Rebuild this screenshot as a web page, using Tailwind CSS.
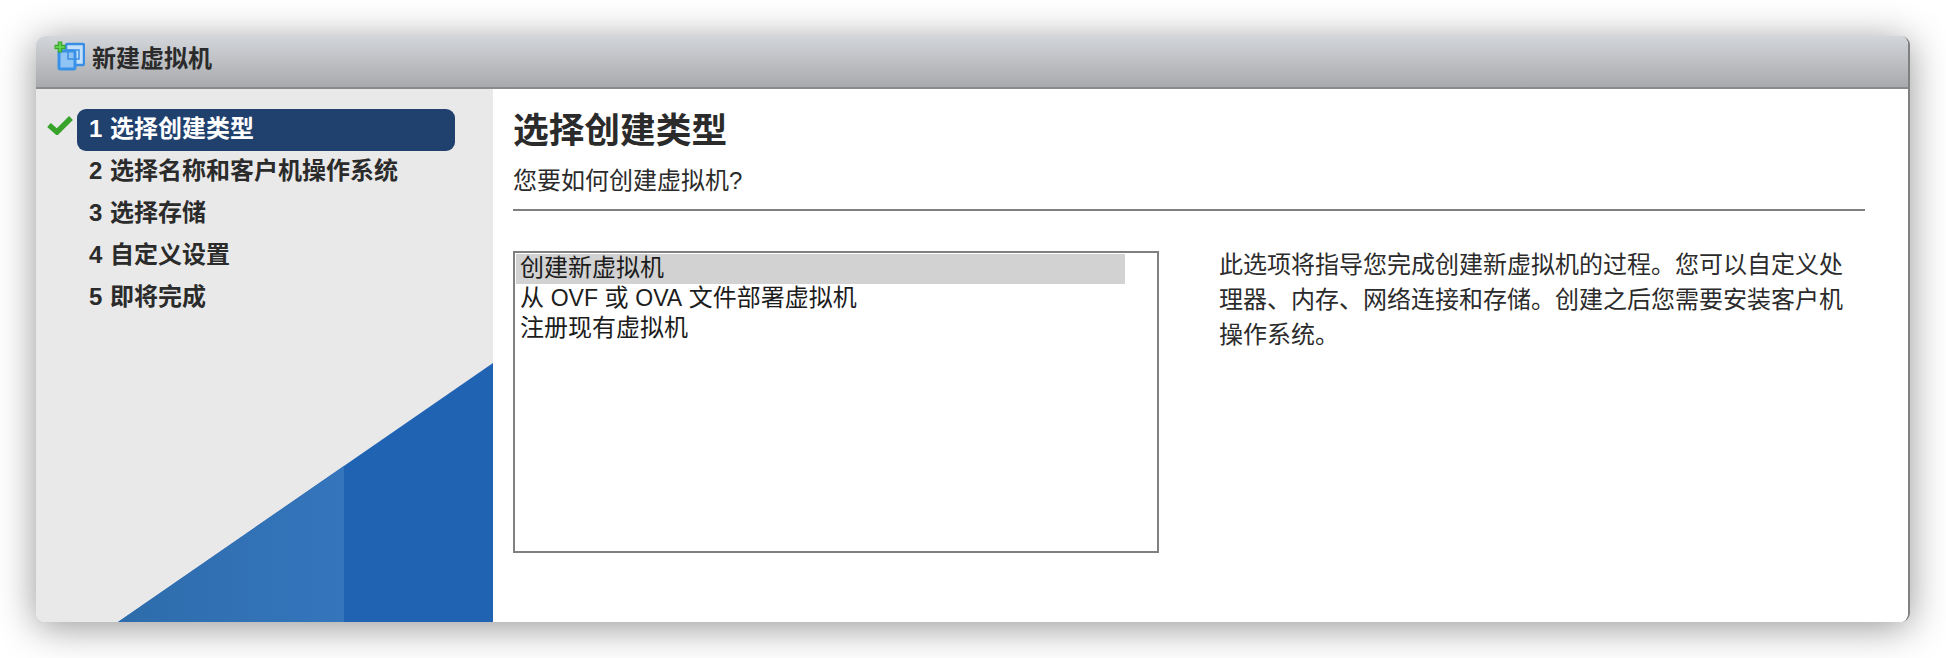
<!DOCTYPE html>
<html lang="zh-CN">
<head>
    <meta charset="UTF-8">
    <title>新建虚拟机</title>
    <script src="https://cdn.jsdelivr.net/npm/@tailwindcss/browser@4"></script>
</head>
<body class="bg-white overflow-hidden font-['Liberation_Sans','Noto_Sans_CJK_SC',sans-serif] text-[#2b2b2b]">
    <div class="w-[1946px] h-[658px] pt-[36px] pl-[36px]">
        <!-- Window -->
        <div class="w-[1874px] h-[586px] rounded-[9px] overflow-hidden flex flex-col bg-white border-r-2 border-[#808080] shadow-[0_5px_38px_rgba(0,0,0,0.42)]">
            <!-- Title bar -->
            <div class="h-[53px] shrink-0 flex items-start pl-[17px] pt-[5px] gap-[7px] bg-gradient-to-b from-[#d3d6db] to-[#a9aaad] border-b-2 border-[#8a8a8a]">
                <svg class="w-[32px] h-[30px]" viewBox="0 0 32 30">
                    <rect x="13" y="3" width="18" height="21" rx="1.500" fill="#c4e0fa" stroke="#3a8fe4" stroke-width="2.500"/>
                    <rect x="6" y="10" width="16" height="18" rx="1.500" fill="#8fc4f5" stroke="#3a92e8" stroke-width="3"/>
                    <rect x="15" y="9" width="11" height="9" fill="none" stroke="#3a8fe4" stroke-width="1.500"/>
                    <path d="M7 0.500v11M1.500 6h11" stroke="#37a82c" stroke-width="4.500"/>
                    <path d="M7 1.500v9M2.500 6h9" stroke="#6bdc55" stroke-width="1.500"/>
                </svg>
                <span class="text-[24px] leading-[30px] font-bold pt-[3px]">新建虚拟机</span>
            </div>

            <div class="flex-1 flex min-h-0">
                <!-- Sidebar -->
                <div class="relative w-[457px] shrink-0 bg-[#e9e9e9] pt-[20px]">
                    <svg class="absolute left-0 bottom-0 w-[457px] h-[259px]" viewBox="0 0 457 259">
                        <defs>
                            <linearGradient id="stripe" x1="0" x2="1" y1="0" y2="0">
                                <stop offset="0" stop-color="#2e6cab"/>
                                <stop offset="1" stop-color="#3475bc"/>
                            </linearGradient>
                        </defs>
                        <polygon points="82,259 457,0 457,259" fill="#2163b3"/>
                        <polygon points="82,259 308,103 308,259" fill="url(#stripe)"/>
                    </svg>
                    <div class="relative flex flex-col text-[24px] leading-[40px] font-bold [word-spacing:1px]">
                        <div class="relative ml-[41px] mr-[38px] h-[42px] pl-[12px] rounded-[9px] bg-[#20406d] text-white">
                            1 选择创建类型
                            <svg class="absolute left-[-30px] top-[6px] w-[26px] h-[20px]" viewBox="0 0 26 20">
                                <path d="M2 10l8 7L24 3" fill="none" stroke="#37a32a" stroke-width="5.500"/>
                            </svg>
                        </div>
                        <div class="pl-[53px] h-[42px]">2 选择名称和客户机操作系统</div>
                        <div class="pl-[53px] h-[42px]">3 选择存储</div>
                        <div class="pl-[53px] h-[42px]">4 自定义设置</div>
                        <div class="pl-[53px] h-[42px]">5 即将完成</div>
                    </div>
                </div>

                <!-- Main -->
                <div class="flex-1 min-w-0 pl-[20px] pr-[43px] bg-white">
                    <h1 class="text-[35.700px] leading-[44px] font-bold mt-[20px]">选择创建类型</h1>
                    <p class="text-[24px] leading-[34px] mt-[11px]">您要如何创建虚拟机?</p>
                    <div class="h-[2px] bg-[#808080] mt-[11px]"></div>

                    <div class="flex mt-[40px]">
                        <div class="w-[646px] h-[302px] shrink-0 border-2 border-[#808080] pt-[1px] pl-[1px] text-[24px] leading-[27px] text-[#1c1c1c]">
                            <div class="w-[609px] h-[30px] pl-[4px] bg-[#d2d2d2]">创建新虚拟机</div>
                            <div class="h-[30px] pl-[4px]">从 <span class="text-[23px]">OVF</span> 或 <span class="text-[23px]">OVA</span> 文件部署虚拟机</div>
                            <div class="h-[30px] pl-[4px]">注册现有虚拟机</div>
                        </div>
                        <p class="w-[630px] ml-[60px] -mt-[4px] h-[110px] text-[24px] leading-[35px]">此选项将指导您完成创建新虚拟机的过程。您可以自定义处理器、内存、网络连接和存储。创建之后您需要安装客户机操作系统。</p>
                    </div>
                </div>
            </div>
        </div>
    </div>
</body>
</html>
